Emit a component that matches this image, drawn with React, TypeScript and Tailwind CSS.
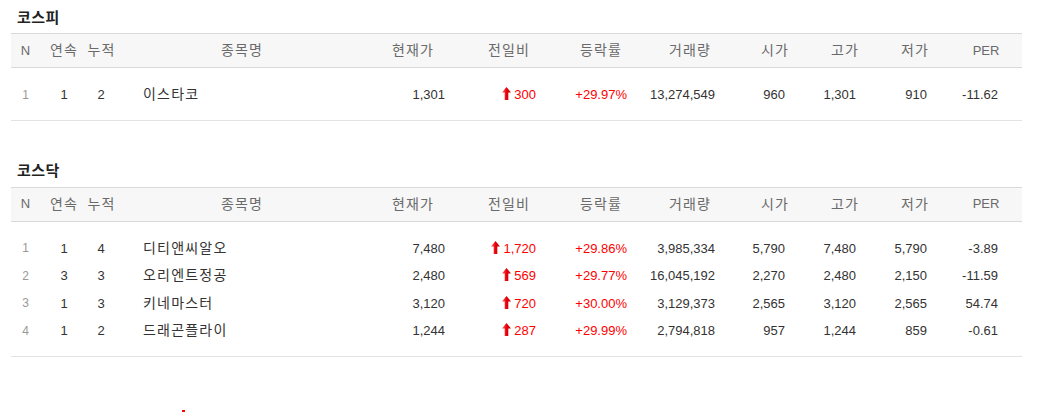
const cols = "grid grid-cols-[29px_48px_26px_256px_86px_106px_78px_100px_70px_70px_70px_72px] whitespace-nowrap";
const ko = "text-[14px] tracking-[1.2px]";

type Row = {
  n: number;
  streak: number;
  total: number;
  name: string;
  price: string;
  diff: string;
  rate: string;
  volume: string;
  open: string;
  high: string;
  low: string;
  per: string;
};

const kospi: Row[] = [
  { n: 1, streak: 1, total: 2, name: "이스타코", price: "1,301", diff: "300", rate: "+29.97%", volume: "13,274,549", open: "960", high: "1,301", low: "910", per: "-11.62" },
];

const kosdaq: Row[] = [
  { n: 1, streak: 1, total: 4, name: "디티앤씨알오", price: "7,480", diff: "1,720", rate: "+29.86%", volume: "3,985,334", open: "5,790", high: "7,480", low: "5,790", per: "-3.89" },
  { n: 2, streak: 3, total: 3, name: "오리엔트정공", price: "2,480", diff: "569", rate: "+29.77%", volume: "16,045,192", open: "2,270", high: "2,480", low: "2,150", per: "-11.59" },
  { n: 3, streak: 1, total: 3, name: "키네마스터", price: "3,120", diff: "720", rate: "+30.00%", volume: "3,129,373", open: "2,565", high: "3,120", low: "2,565", per: "54.74" },
  { n: 4, streak: 1, total: 2, name: "드래곤플라이", price: "1,244", diff: "287", rate: "+29.99%", volume: "2,794,818", open: "957", high: "1,244", low: "859", per: "-0.61" },
];

const UpArrow = () => (
  <svg width="9" height="13" viewBox="0 0 9 13" className="mr-[3px] mb-[2px]">
    <defs>
      <linearGradient id="ua" x1="0" x2="1" y1="0" y2="0">
        <stop offset="0" stopColor="#ff6a6a" />
        <stop offset="0.5" stopColor="#e8000b" />
        <stop offset="1" stopColor="#b80000" />
      </linearGradient>
    </defs>
    <polygon points="4.5,0 9,5.5 6.3,5.5 6.3,13 2.7,13 2.7,5.5 0,5.5" fill="url(#ua)" />
  </svg>
);

const Header = () => (
  <div className={`${cols} h-[35px] items-center border-y border-[#d9d9d9] bg-[#f7f7f7] text-[13px] text-[#6a6a6a]`}>
    <span className="text-center">N</span>
    <span className={`text-center ${ko}`}>연속</span>
    <span className={`flex justify-center pl-[1px] ${ko}`}>누적</span>
    <span className={`text-center ${ko}`}>종목명</span>
    <span className={`text-center ${ko}`}>현재가</span>
    <span className={`text-center ${ko}`}>전일비</span>
    <span className={`text-center ${ko}`}>등락률</span>
    <span className={`text-center ${ko}`}>거래량</span>
    <span className={`text-center ${ko}`}>시가</span>
    <span className={`text-center ${ko}`}>고가</span>
    <span className={`text-center ${ko}`}>저가</span>
    <span className="text-center">PER</span>
  </div>
);

const Table = ({ title, rows }: { title: string; rows: Row[] }) => (
  <section>
    <h3 className="h-[33px] pt-[3px] pl-[6px] flex items-center text-[15px] tracking-[0.5px] font-bold text-[#222]">{title}</h3>
    <Header />
    <div className="pt-[13px] pb-[11px] border-b border-[#e3e3e3]">
      {rows.map((r) => (
        <div key={r.n} className={`${cols} h-[27.5px] items-center text-[13px] text-[#333]`}>
          <span className="text-center text-[12px] text-[#999]">{r.n}</span>
          <span className="text-center">{r.streak}</span>
          <span className="text-center">{r.total}</span>
          <span className={`pl-[29px] ${ko}`}>{r.name}</span>
          <span className="text-right pr-[11px]">{r.price}</span>
          <span className="flex items-center justify-end pr-[26px] text-[#f00]">
            <UpArrow />
            {r.diff}
          </span>
          <span className="text-right pr-[13px] text-[#f00]">{r.rate}</span>
          <span className="text-right pr-[25px]">{r.volume}</span>
          <span className="text-right pr-[25px]">{r.open}</span>
          <span className="text-right pr-[24px]">{r.high}</span>
          <span className="text-right pr-[23px]">{r.low}</span>
          <span className="text-right pr-[24px]">{r.per}</span>
        </div>
      ))}
    </div>
  </section>
);

export default function App() {
  return (
    <div className="w-[1037px] h-[412px] overflow-hidden bg-white pl-[11px] font-['Liberation_Sans','Noto_Sans_CJK_KR',sans-serif]">
      <div className="w-[1011px]">
        <Table title="코스피" rows={kospi} />
        <div className="mt-[33px]">
          <Table title="코스닥" rows={kosdaq} />
        </div>
        <div className="mt-[53px] pl-[171px]">
          <div className="w-[3px] h-[4px] bg-[#f00]" />
        </div>
      </div>
    </div>
  );
}
